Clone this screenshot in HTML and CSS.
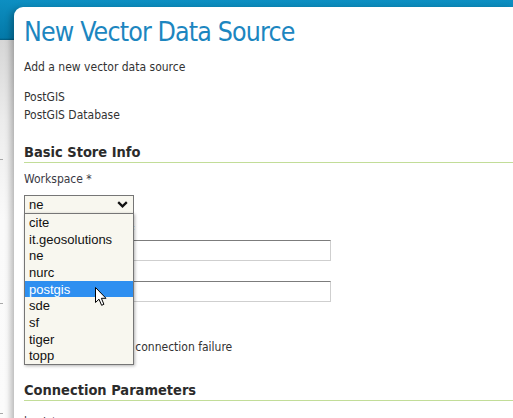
FILE: index.html
```html
<!DOCTYPE html>
<html>
<head>
<meta charset="utf-8">
<link rel="stylesheet" href="styles.css">
</head>
<body>
<div class="page">
  <span class="tick t1"></span><span class="tick t2"></span><span class="tick t3"></span>
  <div class="panel">
    <h1 class="title">New Vector Data Source</h1>
    <p class="subtitle">Add a new vector data source</p>
    <div class="source">
      <div>PostGIS</div>
      <div>PostGIS Database</div>
    </div>
    <h2 class="section">Basic Store Info</h2>
    <div class="field ws">
      <label class="label">Workspace *</label>
      <div class="select-wrap">
        <div class="select">
          <span>ne</span>
          <svg class="chev" width="11" height="7" viewBox="0 0 11 7"><polyline points="1.2,1.2 5.5,5.3 9.8,1.2" fill="none" stroke="#111" stroke-width="2.3"/></svg>
        </div>
        <ul class="options">
          <li>cite</li>
          <li>it.geosolutions</li>
          <li>ne</li>
          <li>nurc</li>
          <li class="hl">postgis</li>
          <li>sde</li>
          <li>sf</li>
          <li>tiger</li>
          <li>topp</li>
        </ul>
        <svg class="cursor" width="13" height="20" viewBox="0 0 13 20"><path d="M0.5,0.5 L0.5,15.5 L4,12.2 L6.6,18.3 L8.9,17.3 L6.4,11.3 L11,11.3 Z" fill="#fff" stroke="#000" stroke-width="1" stroke-linejoin="miter"/></svg>
      </div>
    </div>
    <div class="field">
      <label class="label">Data Source Name *</label>
      <div class="input"></div>
    </div>
    <div class="field">
      <label class="label">Description</label>
      <div class="input"></div>
    </div>
    <div class="check"><span class="box"></span>Enabled</div>
    <div class="check c2"><span class="box"></span>Disconnect on connection failure</div>
    <h2 class="section s2">Connection Parameters</h2>
    <div class="field"><label class="label">host *</label></div>
  </div>
</div>
</body>
</html>
```
FILE: styles.css
```css
html, body {
  margin: 0;
  padding: 0;
  height: 100%;
  overflow: hidden;
}
body {
  background:
    linear-gradient(to bottom, #0d8fc2 0px, #0479a8 38px, #02587a 40px, #d6d6d6 40px, #ececec 120px, #fafafa 220px, #fbfbfb 100%);
  font-family: "DejaVu Sans", sans-serif;
  font-stretch: condensed;
  color: #333;
}
.page {
  position: relative;
  height: 100%;
}
.tick {
  position: absolute;
  left: 0;
  width: 3px;
  height: 1px;
  background: #a8a8a8;
}
.t1 { top: 152px; }
.t2 { top: 296px; }
.t3 { top: 406px; }
.panel {
  margin-left: 14px;
  margin-top: 7px;
  background: #fff;
  border-top-left-radius: 9px;
  padding: 9px 0 0 10px;
  min-height: 500px;
  box-shadow: -3px 2px 6px rgba(0,0,0,0.28);
}
.title {
  margin: 0;
  font-weight: normal;
  font-size: 26.5px;
  letter-spacing: -0.85px;
  line-height: 32px;
  color: #1c86c0;
}
.subtitle {
  margin: 11px 0 0;
  font-size: 12px;
  line-height: 16px;
}
.source {
  margin-top: 13px;
  font-size: 12px;
  line-height: 18px;
}
.section {
  margin: 19px 0 0;
  font-size: 14.5px;
  line-height: 18px;
  font-weight: bold;
  color: #2b2b2b;
  padding-bottom: 1px;
  border-bottom: 1px solid #c2dd98;
}
.field {
  font-size: 12px;
}
.label {
  display: block;
  line-height: 16px;
  color: #3a3a44;
}
.ws {
  margin-top: 8px;
}
.ws .label {
  margin-bottom: 8px;
}
.select-wrap {
  position: relative;
  width: 110px;
}
.select {
  box-sizing: border-box;
  height: 19px;
  border: 1px solid #767676;
  background: #f8f7ef;
  font-family: "Liberation Sans", Arial, sans-serif;
  font-stretch: normal;
  font-size: 13px;
  line-height: 17px;
  color: #111;
  padding-left: 4px;
  display: flex;
  align-items: center;
  justify-content: space-between;
  padding-right: 5px;
}
.chev { display: block; }
.options {
  position: absolute;
  left: 0;
  top: 18px;
  z-index: 5;
  box-sizing: border-box;
  width: 110px;
  margin: 0;
  padding: 0;
  list-style: none;
  border: 1px solid #767676;
  background: #f8f7ef;
  box-shadow: 1px 1px 3px rgba(0,0,0,0.3);
  font-family: "Liberation Sans", Arial, sans-serif;
  font-stretch: normal;
  font-size: 13px;
  color: #111;
}
.options li {
  height: 16.66px;
  line-height: 17.5px;
  padding-left: 4px;
}
.options li.hl {
  background: #2e8ff0;
  color: #fff;
}
.cursor {
  position: absolute;
  left: 71px;
  top: 92px;
  z-index: 6;
}
.field .input {
  box-sizing: border-box;
  width: 307px;
  height: 21px;
  border-style: solid;
  border-width: 1px;
  border-color: #7c7c7c #cfcfcf #cfcfcf #7c7c7c;
  background: #fff;
}
.field + .field {
  margin-top: 2px;
}
.ws + .field {
  margin-top: 8px;
}
.ws + .field .label,
.ws + .field + .field .label {
  margin-bottom: 2px;
}
.check {
  font-size: 12px;
  line-height: 16px;
  margin-top: 10px;
  display: flex;
  align-items: center;
  color: #333;
}
.check.c2 {
  margin-top: 11px;
}
.box {
  width: 11px;
  height: 11px;
  border: 1px solid #777;
  border-radius: 2px;
  margin-right: 6px;
}
.c2 .box {
  margin-right: 18px;
}
.s2 {
  margin-top: 26px;
}
.s2 + .field {
  margin-top: 13px;
}
```
